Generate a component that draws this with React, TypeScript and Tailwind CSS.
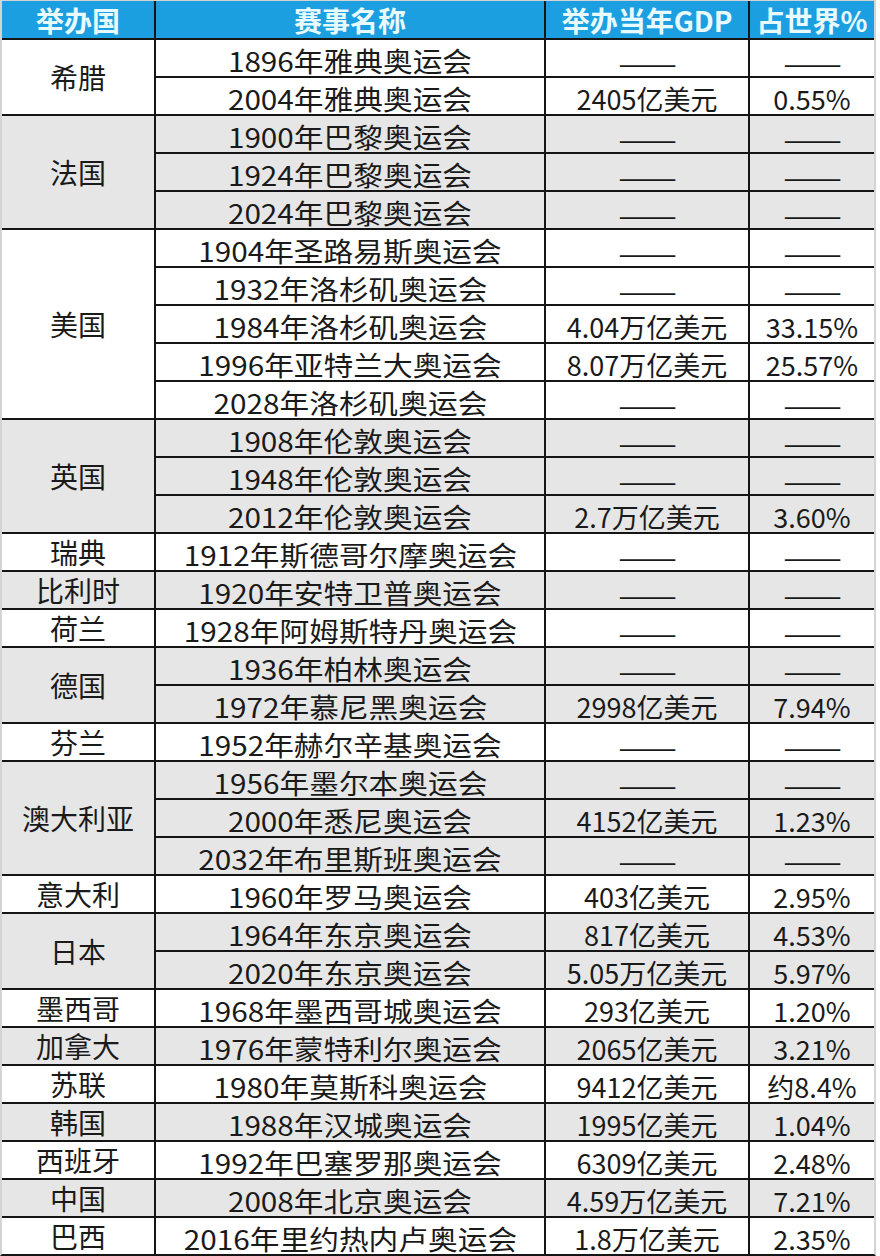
import React from "react";

type Row = { e: string; g: string; p: string };
type Group = { c: string; rows: Row[] };

const D = "——";

const groups: Group[] = [
  { c: "希腊", rows: [ { e: "1896年雅典奥运会", g: D, p: D }, { e: "2004年雅典奥运会", g: "2405亿美元", p: "0.55%" } ] },
  { c: "法国", rows: [ { e: "1900年巴黎奥运会", g: D, p: D }, { e: "1924年巴黎奥运会", g: D, p: D }, { e: "2024年巴黎奥运会", g: D, p: D } ] },
  { c: "美国", rows: [ { e: "1904年圣路易斯奥运会", g: D, p: D }, { e: "1932年洛杉矶奥运会", g: D, p: D }, { e: "1984年洛杉矶奥运会", g: "4.04万亿美元", p: "33.15%" }, { e: "1996年亚特兰大奥运会", g: "8.07万亿美元", p: "25.57%" }, { e: "2028年洛杉矶奥运会", g: D, p: D } ] },
  { c: "英国", rows: [ { e: "1908年伦敦奥运会", g: D, p: D }, { e: "1948年伦敦奥运会", g: D, p: D }, { e: "2012年伦敦奥运会", g: "2.7万亿美元", p: "3.60%" } ] },
  { c: "瑞典", rows: [ { e: "1912年斯德哥尔摩奥运会", g: D, p: D } ] },
  { c: "比利时", rows: [ { e: "1920年安特卫普奥运会", g: D, p: D } ] },
  { c: "荷兰", rows: [ { e: "1928年阿姆斯特丹奥运会", g: D, p: D } ] },
  { c: "德国", rows: [ { e: "1936年柏林奥运会", g: D, p: D }, { e: "1972年慕尼黑奥运会", g: "2998亿美元", p: "7.94%" } ] },
  { c: "芬兰", rows: [ { e: "1952年赫尔辛基奥运会", g: D, p: D } ] },
  { c: "澳大利亚", rows: [ { e: "1956年墨尔本奥运会", g: D, p: D }, { e: "2000年悉尼奥运会", g: "4152亿美元", p: "1.23%" }, { e: "2032年布里斯班奥运会", g: D, p: D } ] },
  { c: "意大利", rows: [ { e: "1960年罗马奥运会", g: "403亿美元", p: "2.95%" } ] },
  { c: "日本", rows: [ { e: "1964年东京奥运会", g: "817亿美元", p: "4.53%" }, { e: "2020年东京奥运会", g: "5.05万亿美元", p: "5.97%" } ] },
  { c: "墨西哥", rows: [ { e: "1968年墨西哥城奥运会", g: "293亿美元", p: "1.20%" } ] },
  { c: "加拿大", rows: [ { e: "1976年蒙特利尔奥运会", g: "2065亿美元", p: "3.21%" } ] },
  { c: "苏联", rows: [ { e: "1980年莫斯科奥运会", g: "9412亿美元", p: "约8.4%" } ] },
  { c: "韩国", rows: [ { e: "1988年汉城奥运会", g: "1995亿美元", p: "1.04%" } ] },
  { c: "西班牙", rows: [ { e: "1992年巴塞罗那奥运会", g: "6309亿美元", p: "2.48%" } ] },
  { c: "中国", rows: [ { e: "2008年北京奥运会", g: "4.59万亿美元", p: "7.21%" } ] },
  { c: "巴西", rows: [ { e: "2016年里约热内卢奥运会", g: "1.8万亿美元", p: "2.35%" } ] },
];

const spanClass: Record<number, string> = {
  1: "row-span-1",
  2: "row-span-2",
  3: "row-span-3",
  5: "row-span-5",
};

function Val({ v, bg }: { v: string; bg: string }) {
  const dash = v === D;
  return (
    <div className={`${bg} flex items-center justify-center pt-[4px]`}>
      {dash ? (
        <span className="leading-none text-[28px] text-[#1a1a1a] inline-block scale-x-[1.25] translate-y-[2px]">{v}</span>
      ) : (
        <span className="leading-none text-[27px] text-[#1a1a1a] whitespace-nowrap">{v}</span>
      )}
    </div>
  );
}

export default function App() {
  const cells: React.ReactNode[] = [];
  groups.forEach((g, gi) => {
    const bg = gi % 2 === 0 ? "bg-white" : "bg-[#e6e6e6]";
    cells.push(
      <div key={`c${gi}`} className={`${bg} ${spanClass[g.rows.length]} flex items-center justify-center`}>
        <span className="leading-none text-[28px] text-[#1a1a1a] whitespace-nowrap">{g.c}</span>
      </div>
    );
    g.rows.forEach((r, ri) => {
      cells.push(
        <div key={`e${gi}-${ri}`} className={`${bg} flex items-center justify-center pt-[4px]`}>
          <span className="leading-none text-[27px] text-[#1a1a1a] whitespace-nowrap scale-x-[1.1] inline-block">{r.e}</span>
        </div>
      );
      cells.push(<Val key={`g${gi}-${ri}`} v={r.g} bg={bg} />);
      cells.push(<Val key={`p${gi}-${ri}`} v={r.p} bg={bg} />);
    });
  });

  return (
    <div className="w-[880px] h-[1256px] bg-white overflow-hidden" style={{ fontFamily: '"Noto Sans CJK SC", "Noto Sans", sans-serif' }}>
      <div className="w-[876px] border-l-2 border-r-2 border-t border-b-2 border-l-[#d4d4d4] border-r-[#d4d4d4] border-t-[#d4d4d4] border-b-[#151515] bg-[#151515]">
        <div className="grid grid-cols-[152px_388px_202px_124px] grid-rows-[37px] auto-rows-[36px] gap-[2px]">
          {["举办国", "赛事名称", "举办当年GDP", "占世界%"].map((h) => (
            <div key={h} className="bg-[#1c9fe1] flex items-center justify-center">
              <span className="leading-none text-[28px] font-bold text-[#e8fbff] whitespace-nowrap">{h}</span>
            </div>
          ))}
          {cells}
        </div>
      </div>
    </div>
  );
}
